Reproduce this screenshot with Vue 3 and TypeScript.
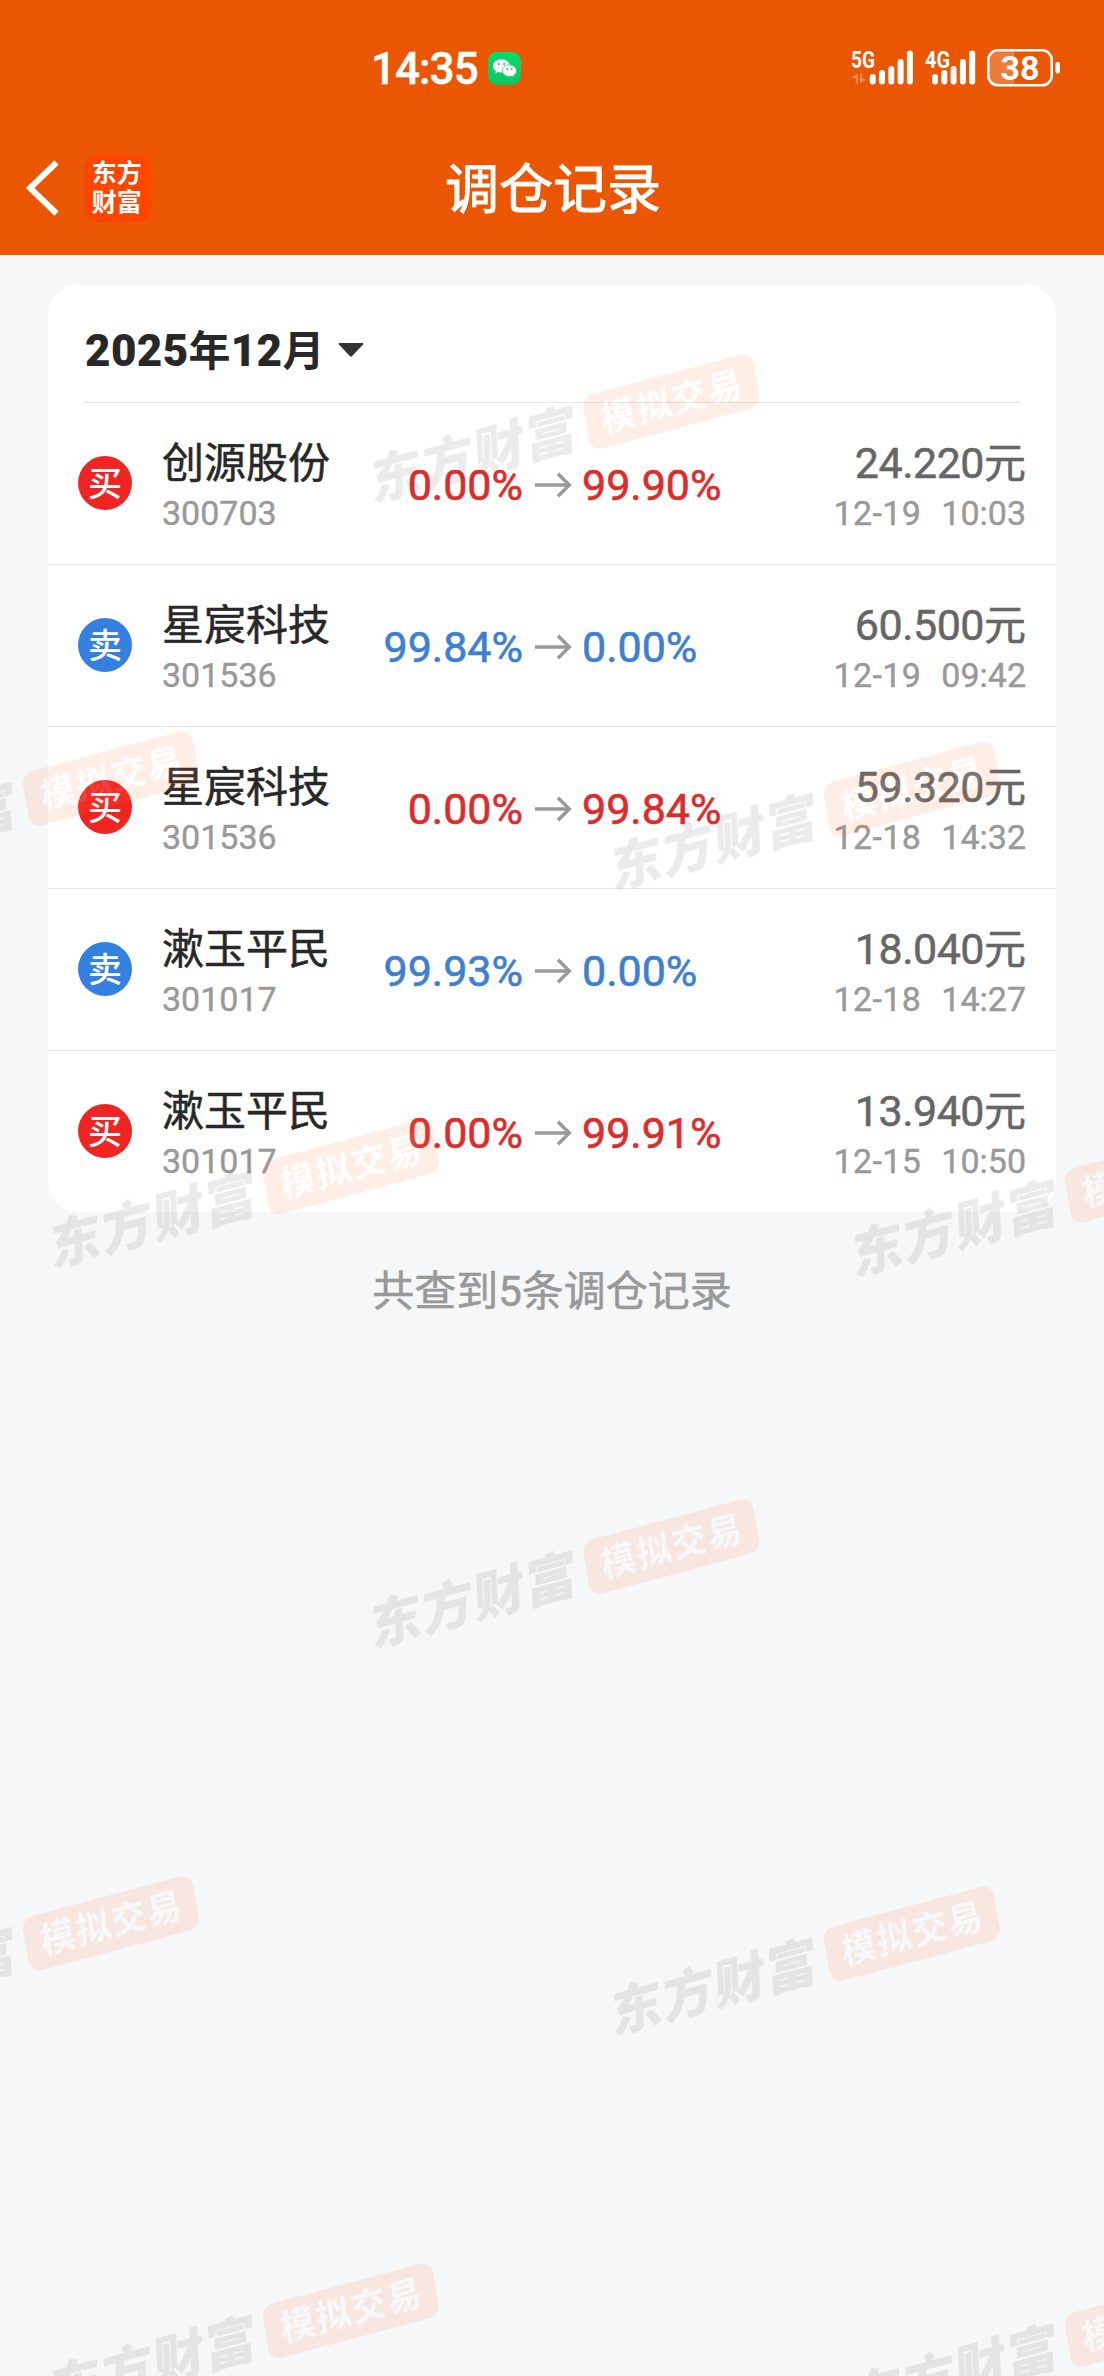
<script setup lang="ts">
type Side = 'buy' | 'sell'

interface RebalanceRecord {
  side: Side
  name: string
  code: string
  from: string
  to: string
  price: string
  day: string
  time: string
}

interface Point {
  x: number
  y: number
}

const records: RebalanceRecord[] = [
  { side: 'buy', name: '创源股份', code: '300703', from: '0.00%', to: '99.90%', price: '24.220', day: '12-19', time: '10:03' },
  { side: 'sell', name: '星宸科技', code: '301536', from: '99.84%', to: '0.00%', price: '60.500', day: '12-19', time: '09:42' },
  { side: 'buy', name: '星宸科技', code: '301536', from: '0.00%', to: '99.84%', price: '59.320', day: '12-18', time: '14:32' },
  { side: 'sell', name: '漱玉平民', code: '301017', from: '99.93%', to: '0.00%', price: '18.040', day: '12-18', time: '14:27' },
  { side: 'buy', name: '漱玉平民', code: '301017', from: '0.00%', to: '99.91%', price: '13.940', day: '12-15', time: '10:50' },
]

const sideLabel: Record<Side, string> = { buy: '买', sell: '卖' }

/* Signal bar tops, shortest to tallest */
const barTops: number[] = [24, 20, 16, 9, 0.5]

/* Anchor of each watermark: the top-left corner of its pill */
const marks: Point[] = [
  { x: 581.5, y: 397.3 },
  { x: 21, y: 774 },
  { x: 822, y: 784.7 },
  { x: 261, y: 1162.5 },
  { x: 1063, y: 1171 },
  { x: 581.5, y: 1542.3 },
  { x: 21, y: 1919 },
  { x: 822, y: 1929.5 },
  { x: 261, y: 2306.5 },
  { x: 1063, y: 2315.3 },
]
</script>

<template>
  <div class="page">
    <header class="top">
      <div class="status">
        <div class="clock">
          <span class="clock-text">14:35</span>
          <svg class="wechat" viewBox="0 0 33 33">
            <defs>
              <linearGradient id="wx" x1="0" y1="0" x2="0" y2="1">
                <stop offset="0" stop-color="#06dc6c" />
                <stop offset="1" stop-color="#0cc763" />
              </linearGradient>
            </defs>
            <rect width="33" height="33" rx="9" fill="url(#wx)" />
            <path d="M13.4 7.2c-4.8 0-8.4 3-8.4 6.7 0 2.2 1.2 4 3 5.2l-.7 2.3 2.7-1.3c1.1.3 2.2.5 3.4.5 4.8 0 8.4-3 8.4-6.700s-3.600-6.700-8.400-6.700z" fill="#fff" />
            <path d="M21.500 12.800c-4 0-7.200 2.700-7.200 5.900s3.200 5.900 7.200 5.900c.9 0 1.800-.1 2.600-.4l2.200 1.100-.6-1.900c1.700-1.100 2.800-2.800 2.800-4.700 0-3.200-3.100-5.900-7-5.900z" fill="#fff" stroke="#09d168" stroke-width=".8" />
            <circle cx="10.800" cy="12" r="1.100" fill="#09d168" />
            <circle cx="16.200" cy="12" r="1.100" fill="#09d168" />
            <circle cx="19.200" cy="17" r=".9" fill="#09d168" />
            <circle cx="23.700" cy="17" r=".9" fill="#09d168" />
          </svg>
        </div>
        <div class="indicators">
          <svg class="signal" width="63" height="37" viewBox="0 0 63 37">
            <text class="net" x="0" y="19" textLength="24" lengthAdjust="spacingAndGlyphs">5G</text>
            <path d="M7 24.500v10H4.700v-5.500H0zM9 34.500v-10h2.300v5.500h4.500z" fill="#ff8d52" />
            <rect v-for="(t, i) in barTops" :key="i" :x="18.700 + i * 9.300" :y="t + 1" width="6" :height="34.500 - t" rx="3" />
          </svg>
          <svg class="signal second" width="52" height="37" viewBox="0 0 52 37">
            <text class="net" x="0" y="19" textLength="25" lengthAdjust="spacingAndGlyphs">4G</text>
            <rect v-for="(t, i) in barTops" :key="i" :x="7 + i * 9.300" :y="t + 1" width="6" :height="34.500 - t" rx="3" />
          </svg>
          <svg class="battery" width="74" height="38" viewBox="0 0 74 38">
            <path d="M11 1.300H27v35H11A9.700 9.700 0 0 1 1.300 26.600V11A9.700 9.700 0 0 1 11 1.300z" fill="#fff" fill-opacity=".22" />
            <rect x="1.300" y="1.300" width="63.400" height="35" rx="9.700" fill="none" stroke="#fff" stroke-width="2.600" />
            <rect x="68.500" y="13" width="4.500" height="11.500" rx="2" fill="#fff" />
            <text class="level" x="33" y="31" text-anchor="middle">38</text>
          </svg>
        </div>
      </div>
      <div class="nav">
        <svg class="back" width="34" height="56" viewBox="0 0 34 56">
          <path d="M30.500 2.500 4 28l26.500 25.500" fill="none" stroke="#fff" stroke-width="6" />
        </svg>
        <div class="brand"><span>东方</span><span>财富</span></div>
        <h1 class="title">调仓记录</h1>
      </div>
    </header>

    <main class="card">
      <div class="month">
        <span class="month-text"><b>2025</b>年<b>12</b>月</span>
        <svg width="26" height="14" viewBox="0 0 26 14">
          <path d="M1.500 0h23q1.500.4.600 1.500L14.200 13q-1.200 1-2.400 0L.9 1.500Q0 .4 1.500 0z" fill="#333" />
        </svg>
      </div>
      <ul class="rows">
        <li v-for="(r, i) in records" :key="i" class="row" :class="r.side">
          <span class="badge">{{ sideLabel[r.side] }}</span>
          <div class="stock">
            <div class="name">{{ r.name }}</div>
            <div class="code">{{ r.code }}</div>
          </div>
          <span class="pct from">{{ r.from }}</span>
          <svg class="arrow" width="38" height="26" viewBox="0 0 38 26">
            <path d="M1 13h34M24 1.800 35.300 13 24 24.200" fill="none" stroke="#999" stroke-width="3.400" />
          </svg>
          <span class="pct to">{{ r.to }}</span>
          <div class="deal">
            <div class="price">{{ r.price }}<span>元</span></div>
            <div class="when"><span>{{ r.day }}</span><span>{{ r.time }}</span></div>
          </div>
        </li>
      </ul>
    </main>

    <p class="summary">共查到5条调仓记录</p>

    <svg class="watermarks" width="1104" height="2376" viewBox="0 0 1104 2376">
      <g v-for="(m, i) in marks" :key="i" opacity=".12" :transform="`translate(${m.x} ${m.y})`">
        <text class="mark-brand" text-anchor="middle" transform="matrix(.966 -.259 .05 1.020 -107 57.500)" x="0" y="19">东方财富</text>
        <g transform="matrix(.966 -.259 .176 .985 0 0)">
          <rect width="176" height="55" rx="12" fill="#ff7130" />
          <text class="mark-tag" text-anchor="middle" x="89" y="40">模拟交易</text>
        </g>
      </g>
    </svg>
  </div>
</template>

<style>
body {
  margin: 0;
  background: #f6f7f9;
}
</style>

<style scoped>
.page {
  position: relative;
  width: 1104px;
  height: 2376px;
  overflow: hidden;
  background: #f6f7f9;
  font-family: Roboto, 'Noto Sans CJK SC', sans-serif;
}

.top {
  height: 255px;
  background: #ea5602;
  color: #fff;
}

.status {
  display: flex;
  justify-content: space-between;
  height: 133px;
  padding: 0 43px 0 371px;
}

.clock {
  display: flex;
  align-items: center;
  height: 137px;
}

.clock-text {
  width: 117px;
  font-size: 44px;
  line-height: 60px;
  font-weight: 500;
  letter-spacing: -1px;
  -webkit-text-stroke: 0.5px #fff;
}

.wechat {
  width: 33px;
  height: 33px;
}

.indicators {
  display: flex;
  align-items: flex-start;
  padding-top: 49px;
}

.signal {
  fill: #fff;
  overflow: visible;
}

.second {
  margin-left: 11px;
}

.battery {
  margin-left: 10px;
}

.net {
  font-size: 24px;
  font-weight: 700;
}

.level {
  font-size: 34px;
  font-weight: 700;
  fill: #fff;
}

.nav {
  display: flex;
  align-items: center;
  height: 110px;
  padding-left: 26px;
}

.brand {
  display: flex;
  flex-direction: column;
  justify-content: center;
  width: 67px;
  height: 67px;
  margin-left: 24px;
  border-radius: 14px;
  background: #ff4500;
  text-align: center;
  font-size: 25px;
  line-height: 29px;
  font-weight: 700;
  text-indent: -1.500px;
}

.title {
  width: 220px;
  margin: 5px 0 0 294px;
  font-size: 54px;
  line-height: 70px;
  font-weight: 400;
  -webkit-text-stroke: 1px #fff;
  white-space: nowrap;
}

.card {
  width: 1008px;
  height: 927px;
  margin: 30px auto 0;
  border-radius: 30px;
  background: #fff;
}

.month {
  display: flex;
  align-items: center;
  height: 117px;
  margin: 0 36px;
  border-bottom: 1px solid #e4e4e4;
}

.month-text {
  box-sizing: border-box;
  width: 254px;
  padding: 16px 0 0 1px;
  font-size: 42px;
  line-height: 54px;
  font-weight: 700;
  color: #282828;
  white-space: nowrap;
}

.month-text b {
  font-size: 44px;
  letter-spacing: 0.4px;
}

.month svg {
  margin-top: 13px;
}

.rows {
  margin: 0;
  padding: 0;
  list-style: none;
}

.row {
  display: grid;
  grid-template-columns: 83px 200px 163px 58px 1fr auto;
  align-items: center;
  height: 161px;
  padding: 0 30px;
  border-bottom: 1px solid #e4e4e4;
}

.row:last-child {
  border-bottom: 0;
}

.badge {
  width: 54px;
  height: 54px;
  margin-top: -2px;
  border-radius: 50%;
  color: #fff;
  font-size: 34px;
  line-height: 56px;
  font-weight: 500;
  text-align: center;
}

.buy .badge {
  background: #f12424;
}

.sell .badge {
  background: #3480e0;
}

.stock {
  padding-left: 1px;
}

.name,
.price {
  height: 50px;
  margin-bottom: 8px;
  font-size: 42px;
  line-height: 52px;
  color: #282828;
  white-space: nowrap;
  -webkit-text-stroke: 0.5px currentColor;
}

.price {
  font-size: 43px;
  line-height: 50px;
  letter-spacing: -0.5px;
  color: #666;
}

.price span {
  font-size: 42px;
  letter-spacing: 0;
}

.code,
.when {
  height: 34px;
  font-size: 34px;
  line-height: 34px;
  color: #999;
  -webkit-text-stroke: 0.4px currentColor;
}

.pct {
  padding-top: 2px;
  font-size: 43px;
  line-height: 50px;
  -webkit-text-stroke: 0.6px currentColor;
}

.from {
  padding-right: 1px;
  text-align: right;
}

.buy .pct {
  color: #dc2c2c;
}

.sell .pct {
  color: #3e7fd2;
}

.arrow {
  justify-self: center;
  margin-top: 3px;
}

.deal {
  text-align: right;
}

.when {
  display: flex;
  justify-content: flex-end;
  gap: 20px;
}

.when span:first-child {
  letter-spacing: 0.4px;
}

.summary {
  margin: 50px 0 0;
  font-size: 42px;
  line-height: 60px;
  text-align: center;
  color: #999;
  -webkit-text-stroke: 0.5px currentColor;
}

.watermarks {
  position: absolute;
  left: 0;
  top: 0;
  pointer-events: none;
}

.mark-brand {
  font-size: 52px;
  font-weight: 900;
  letter-spacing: 1.500px;
  fill: #555;
}

.mark-tag {
  font-size: 35px;
  font-weight: 700;
  letter-spacing: 1.800px;
  fill: #fff;
}
</style>
